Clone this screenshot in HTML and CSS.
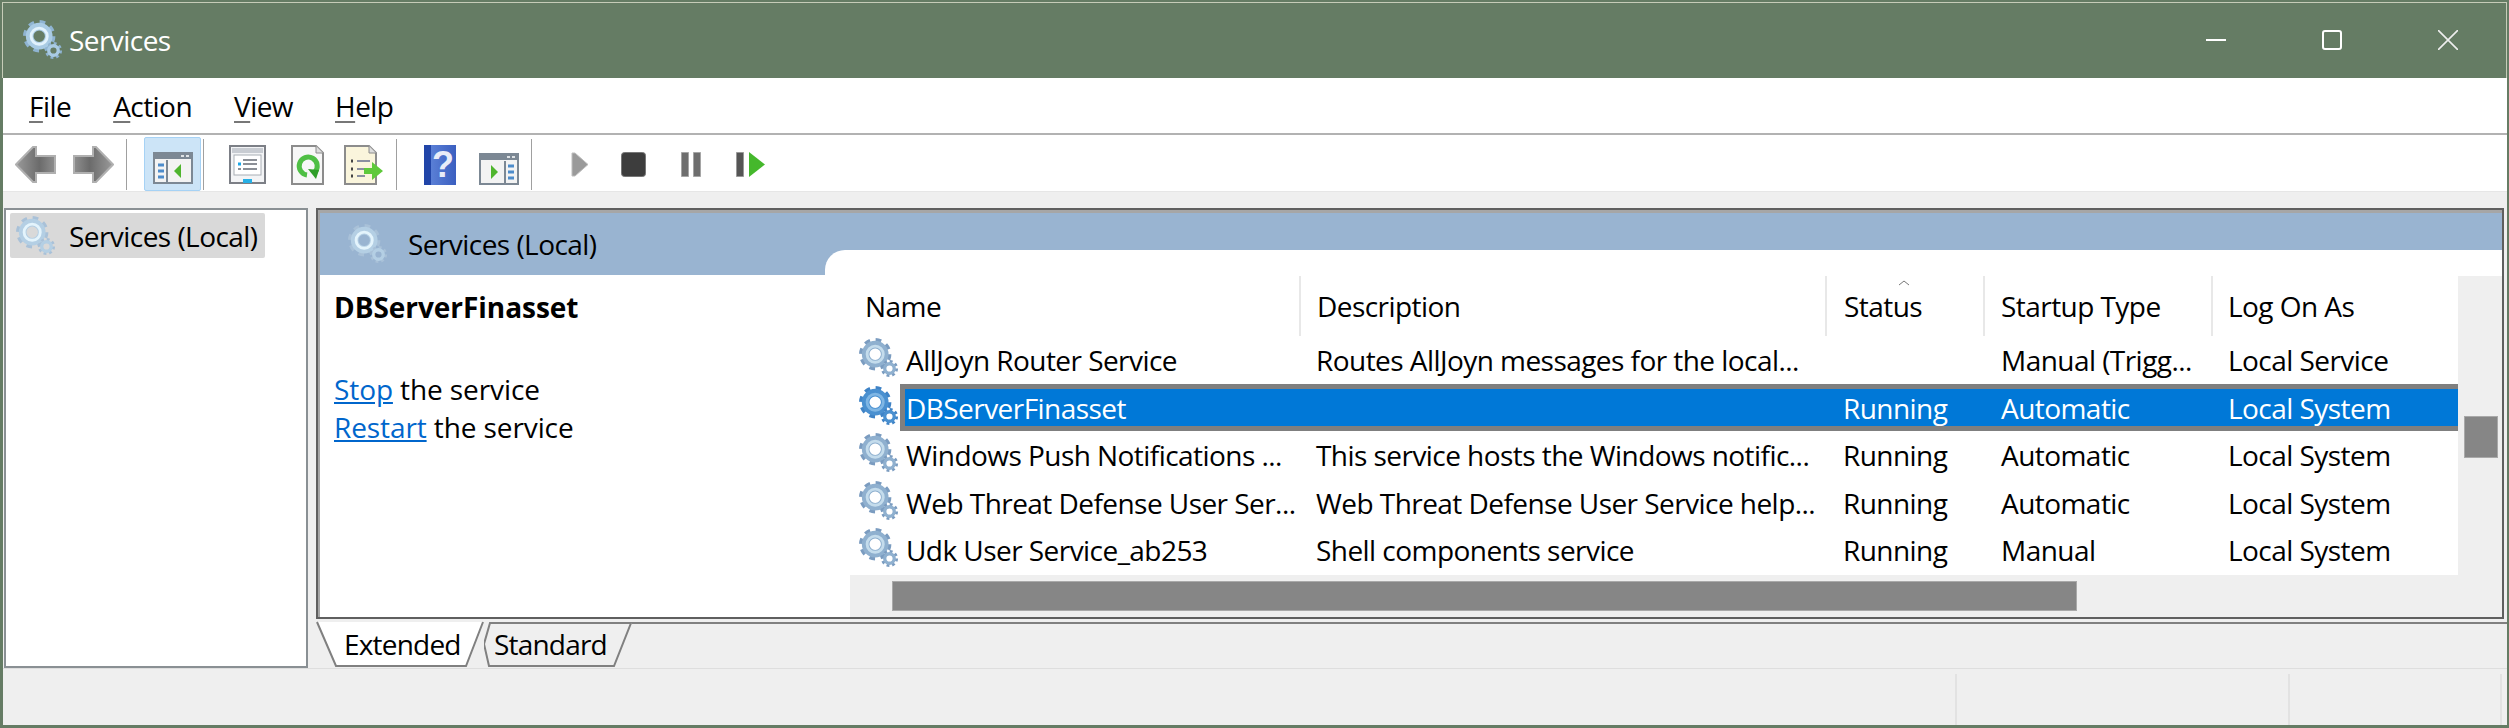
FILE: index.html
```html
<!DOCTYPE html>
<html lang="en">
<head>
    <meta charset="UTF-8">
    <title>Services</title>
    <link rel="stylesheet" href="styles.css">
</head>
<body>
    <!-- shared icon shapes -->
    <svg class="defs" width="0" height="0">
        <defs>
            <linearGradient id="arrowFill" x1="0" y1="0" x2="1" y2="0">
                <stop offset="0" stop-color="#9a9a9a"/>
                <stop offset="0.6" stop-color="#6b6b6b"/>
                <stop offset="1" stop-color="#8f8f8f"/>
            </linearGradient>
            <symbol id="gear" viewBox="0 0 42 42">
                <circle class="gear-teeth" cx="17" cy="17" r="14.5" fill="none" stroke-width="5" stroke-dasharray="5.7 5.69"/>
                <circle class="gear-body" cx="17" cy="17" r="10" fill="none" stroke-width="8"/>
                <circle class="gear-ring" cx="17" cy="17" r="8.5" fill="none" stroke-width="3"/>
                <circle class="gear-teeth" cx="32" cy="32" r="7.5" fill="none" stroke-width="3" stroke-dasharray="2.95 2.95"/>
                <circle class="gear-body" cx="32" cy="32" r="5" fill="none" stroke-width="3.5"/>
            </symbol>
            <symbol id="arrow" viewBox="0 0 41 37">
                <path d="M1 18.5 18 1h3v9h19v17H21v9h-3z" fill="url(#arrowFill)" stroke="#b0b0b0" stroke-width="2"/>
            </symbol>
        </defs>
    </svg>

    <div class="app">
        <header class="titlebar">
            <svg class="gear gear-title"><use href="#gear"/></svg>
            <span class="title-text">Services</span>
            <div class="win-controls">
                <div class="win-btn"><svg width="20" height="20"><path d="M0 10h20" stroke="#fff" stroke-width="2"/></svg></div>
                <div class="win-btn"><svg width="20" height="20"><rect x="1" y="1" width="18" height="18" rx="2" fill="none" stroke="#fff" stroke-width="2"/></svg></div>
                <div class="win-btn"><svg width="20" height="20"><path d="M0 0l20 20M20 0 0 20" stroke="#eee" stroke-width="1.6"/></svg></div>
            </div>
        </header>

        <div class="client">
            <nav class="menubar">
                <span class="menu-item"><u>F</u>ile</span>
                <span class="menu-item"><u>A</u>ction</span>
                <span class="menu-item"><u>V</u>iew</span>
                <span class="menu-item"><u>H</u>elp</span>
            </nav>

            <div class="toolbar">
                <div class="tb-group tb-nav">
                    <svg class="tb-icon" width="41" height="37"><use href="#arrow"/></svg>
                    <svg class="tb-icon flip" width="41" height="37"><use href="#arrow"/></svg>
                </div>
                <div class="tb-sep sep-a"></div>
                <div class="tb-active">
                    <svg width="40" height="32" viewBox="0 0 40 32">
                        <rect x="1" y="1" width="38" height="30" fill="#f3f3f3" stroke="#7c8894" stroke-width="2"/>
                        <rect x="1" y="1" width="38" height="6" fill="#7c8894"/>
                        <path d="M28 4h3M33 4h3" stroke="#dfe3e6" stroke-width="2"/>
                        <rect x="13" y="8" width="2" height="22" fill="#7c8894"/>
                        <path d="M5 13h6M5 19h6M5 25h6" stroke="#4d8ccb" stroke-width="3"/>
                        <path d="M21 19l7-7v14z" fill="#4fb52e"/>
                    </svg>
                </div>
                <div class="tb-sep sep-b"></div>
                <div class="tb-group tb-tools">
                    <svg class="tb-icon" width="37" height="40" viewBox="0 0 37 40">
                        <rect x="1" y="1" width="35" height="37" fill="#f3f4f6" stroke="#7c7f86" stroke-width="2"/>
                        <rect x="3" y="3" width="31" height="5" fill="#c8ccd2"/>
                        <rect x="5" y="10" width="27" height="20" fill="#fff" stroke="#a8adb4"/>
                        <path d="M9 19h3" stroke="#1aa7e8" stroke-width="3"/>
                        <path d="M14 15h14M14 19h14M14 24h14M9 24h3" stroke="#8b8f96" stroke-width="2"/>
                        <rect x="14" y="34" width="9" height="4" fill="#27b0e6"/>
                    </svg>
                    <svg class="tb-icon" width="33" height="40" viewBox="0 0 33 40">
                        <path d="M1 1h24l7 7v31H1z" fill="#f7f7f7" stroke="#8c8c8c" stroke-width="2"/>
                        <path d="M25 1v7h7" fill="#ddd" stroke="#8c8c8c"/>
                        <path d="M24 27a9 9 0 1 0-8 3" fill="none" stroke="#4fbf45" stroke-width="5"/>
                        <path d="M17 24l11 1-3 9z" fill="#2f9e29"/>
                    </svg>
                    <svg class="tb-icon" width="40" height="40" viewBox="0 0 40 40">
                        <path d="M1 1h24l7 7v31H1z" fill="#faf5dc" stroke="#8c8c8c" stroke-width="2"/>
                        <path d="M25 1v7h7" fill="#ddd" stroke="#8c8c8c"/>
                        <path d="M7 16h2M7 24h2M7 31h2" stroke="#444" stroke-width="3"/>
                        <path d="M13 16h13M13 24h8M13 31h8" stroke="#8a8fa0" stroke-width="2"/>
                        <path d="M20 23h8v-6l11 9-11 9v-6h-8z" fill="#5ec93a"/>
                    </svg>
                </div>
                <div class="tb-sep sep-c"></div>
                <div class="tb-group tb-help">
                    <div class="help-icon">?</div>
                    <svg class="tb-icon" width="40" height="32" viewBox="0 0 40 32">
                        <rect x="1" y="1" width="38" height="30" fill="#f3f3f3" stroke="#7c8894" stroke-width="2"/>
                        <rect x="1" y="1" width="38" height="6" fill="#7c8894"/>
                        <path d="M28 4h3M33 4h3" stroke="#dfe3e6" stroke-width="2"/>
                        <rect x="25" y="8" width="2" height="22" fill="#7c8894"/>
                        <path d="M29 13h6M29 19h6M29 25h6" stroke="#4d8ccb" stroke-width="3"/>
                        <path d="M19 19l-7-7v14z" fill="#4fb52e"/>
                    </svg>
                </div>
                <div class="tb-sep sep-c sep-d"></div>
                <div class="tb-group tb-media">
                    <svg class="tb-icon play" width="18" height="25" viewBox="0 0 18 25"><path d="M1 1h3l13 11.5L4 24H1z" fill="#9a9a9a" stroke="#bdbdbd"/></svg>
                    <svg class="tb-icon stop" width="25" height="25" viewBox="0 0 25 25"><rect x="0.5" y="0.5" width="24" height="24" rx="3" fill="#3d3d3d" stroke="#777"/></svg>
                    <svg class="tb-icon pause" width="20" height="25" viewBox="0 0 20 25"><path d="M.5.5h7v24h-7zM12.5.5h7v24h-7z" fill="#6e6e6e" stroke="#a5a5a5"/></svg>
                    <svg class="tb-icon" width="30" height="25" viewBox="0 0 30 25"><path d="M.5.5h7v24h-7z" fill="#555" stroke="#999"/><path d="M13 0l16 12.5L13 25z" fill="#45b82c"/></svg>
                </div>
            </div>

            <main class="main">
                <aside class="tree">
                    <div class="tree-item">
                        <svg class="gear gear-soft"><use href="#gear"/></svg>
                        <span>Services (Local)</span>
                    </div>
                </aside>

                <div class="right">
                    <section class="pane">
                        <div class="pane-grid">
                            <div class="pane-title">
                                <svg class="gear gear-soft"><use href="#gear"/></svg>
                                <span>Services (Local)</span>
                            </div>
                            <div class="desc">
                                <h2 class="desc-name">DBServerFinasset</h2>
                                <p class="desc-actions"><a href="#">Stop</a> the service<br><a href="#">Restart</a> the service</p>
                            </div>
                            <div class="list">
                                <div class="list-body">
                                    <div class="table">
                                        <div class="thead">
                                            <div class="th">Name</div>
                                            <div class="th">Description</div>
                                            <div class="th th-sorted">
                                                <svg class="sort-mark" width="12" height="6"><path d="M1 5l5-4 5 4" fill="none" stroke="#777"/></svg>
                                                Status
                                            </div>
                                            <div class="th">Startup Type</div>
                                            <div class="th th-last">Log On As</div>
                                        </div>
                                        <div class="row">
                                            <svg class="gear gear-list"><use href="#gear"/></svg>
                                            <div class="cells">
                                                <span>AllJoyn Router Service</span>
                                                <span>Routes AllJoyn messages for the local...</span>
                                                <span></span>
                                                <span>Manual (Trigg...</span>
                                                <span>Local Service</span>
                                            </div>
                                        </div>
                                        <div class="row selected">
                                            <svg class="gear gear-selected"><use href="#gear"/></svg>
                                            <div class="cells">
                                                <span>DBServerFinasset</span>
                                                <span></span>
                                                <span>Running</span>
                                                <span>Automatic</span>
                                                <span>Local System</span>
                                            </div>
                                        </div>
                                        <div class="row">
                                            <svg class="gear gear-list"><use href="#gear"/></svg>
                                            <div class="cells">
                                                <span>Windows Push Notifications ...</span>
                                                <span>This service hosts the Windows notific...</span>
                                                <span>Running</span>
                                                <span>Automatic</span>
                                                <span>Local System</span>
                                            </div>
                                        </div>
                                        <div class="row">
                                            <svg class="gear gear-list"><use href="#gear"/></svg>
                                            <div class="cells">
                                                <span>Web Threat Defense User Ser...</span>
                                                <span>Web Threat Defense User Service help...</span>
                                                <span>Running</span>
                                                <span>Automatic</span>
                                                <span>Local System</span>
                                            </div>
                                        </div>
                                        <div class="row">
                                            <svg class="gear gear-list"><use href="#gear"/></svg>
                                            <div class="cells">
                                                <span>Udk User Service_ab253</span>
                                                <span>Shell components service</span>
                                                <span>Running</span>
                                                <span>Manual</span>
                                                <span>Local System</span>
                                            </div>
                                        </div>
                                    </div>
                                    <div class="vscroll"><div class="vthumb"></div></div>
                                </div>
                                <div class="hscroll"><div class="hthumb"></div></div>
                            </div>
                        </div>
                    </section>

                    <div class="tabstrip">
                        <div class="tab tab-on">
                            <svg class="tab-shape" width="168" height="48"><path d="M1 3 20 47H150L167 3" fill="#fff" stroke="#808080" stroke-width="2"/></svg>
                            <span>Extended</span>
                        </div>
                        <div class="tab tab-off">
                            <svg class="tab-shape" width="148" height="48"><path d="M5 47 0 25 6 4H147L130 47z" fill="#efefef" stroke="#808080" stroke-width="2"/></svg>
                            <span>Standard</span>
                        </div>
                        <div class="tab-rest"></div>
                    </div>
                </div>
            </main>

            <footer class="statusbar">
                <div class="status-cell status-wide"></div>
                <div class="status-cell status-mid"></div>
                <div class="status-cell status-end"></div>
            </footer>
        </div>
    </div>
</body>
</html>
```

FILE: styles.css
```css
/* Services window */
:root {
  --frame: #657c64;
  --face: #efefef;
  --header-blue: #99b4d1;
}

* {
  box-sizing: border-box;
}

html, body {
  height: 100%;
}

body {
  margin: 0;
  background-color: var(--frame);
  font-family: "Open Sans", "Noto Sans", sans-serif;
  font-size: 28px;
  letter-spacing: -0.55px;
  color: #000;
  overflow: hidden;
}

.defs {
  position: absolute;
}

.app {
  height: 100%;
  padding: 2px 2px 3px 2px;
  display: flex;
  flex-direction: column;
}

/* gears */
.gear {
  width: 40px;
  height: 40px;
  flex: none;
}

.gear-teeth {
  stroke: var(--teeth);
}

.gear-body {
  stroke: var(--body);
}

.gear-ring {
  stroke: var(--ring);
}

.gear-title {
  --teeth: #8fb4d2;
  --body: #a9cbe4;
  --ring: #e2f2fc;
}

.gear-soft {
  --teeth: #a9c1d8;
  --body: #b4cfe4;
  --ring: #e4f4fc;
}

.gear-list {
  --teeth: #7b9cc0;
  --body: #8fb0cf;
  --ring: #c4dcec;
}

.gear-selected {
  --teeth: #3f83c6;
  --body: #4a90d0;
  --ring: #7fb6e4;
}

/* title bar */
.titlebar {
  height: 76px;
  flex: none;
  display: flex;
  align-items: center;
  padding-bottom: 2px;
  padding-left: 20px;
  border: 1px solid #c6ccb8;
  border-bottom: none;
  color: #fff;
}

.title-text {
  margin-left: 6px;
}

.win-controls {
  margin-left: auto;
  display: flex;
  align-self: stretch;
}

.win-btn {
  width: 116px;
  display: flex;
  align-items: center;
  justify-content: center;
}

.client {
  flex: 1;
  min-height: 0;
  display: flex;
  flex-direction: column;
  background-color: var(--face);
  border-left: 1px solid var(--frame);
}

/* menu */
.menubar {
  height: 55px;
  flex: none;
  display: flex;
  align-items: center;
  gap: 42px;
  padding-left: 26px;
  background-color: #fff;
}

.menu-item u {
  text-decoration-color: #777;
  text-decoration-thickness: 2px;
  text-underline-offset: 4px;
}

/* toolbar */
.toolbar {
  height: 59px;
  flex: none;
  display: flex;
  align-items: center;
  padding: 3px 0 0 12px;
  background-color: #fff;
  border-top: 2px solid #b2b2b2;
  border-bottom: 1px solid #e6e6e6;
}

.tb-group {
  display: flex;
  align-items: center;
}

.tb-nav {
  gap: 17px;
}

.tb-icon {
  display: block;
  flex: none;
}

.flip {
  transform: scaleX(-1);
}

.tb-sep {
  width: 1px;
  height: 51px;
  margin-top: -1px;
  background-color: #a0a0a0;
}

.sep-a {
  margin: 0 17px 0 12px;
}

.sep-b {
  margin: 0 25px 0 2px;
}

.sep-c {
  margin: 0 27px 0 12px;
}

.sep-d {
  margin-right: 39px;
}

.tb-active {
  width: 57px;
  height: 54px;
  margin-top: -1px;
  display: flex;
  align-items: center;
  justify-content: center;
  padding-top: 7px;
  background-color: #cce4f7;
  border: 1px solid #a6d2f5;
  border-radius: 2px;
}

.tb-tools svg:nth-child(1) {
  margin-right: 25px;
}

.tb-tools svg:nth-child(2) {
  margin-right: 20px;
}

.tb-help {
  gap: 23px;
}

.tb-help .tb-icon {
  margin-top: 8px;
}

.help-icon {
  width: 32px;
  height: 40px;
  background: linear-gradient(90deg, #2145a8 0 7px, #5a7fd6 7px, #3b5fc0);
  color: #e8ecf8;
  font-family: "Liberation Sans", sans-serif;
  font-size: 36px;
  font-weight: bold;
  line-height: 40px;
  text-align: center;
  padding-left: 6px;
  letter-spacing: 0;
}

.play {
  margin-right: 32px;
}

.stop, .pause {
  margin-right: 35px;
}

/* main area */
.main {
  flex: 1;
  min-height: 0;
  display: flex;
  padding: 16px 0 0 1px;
}

.tree {
  width: 304px;
  flex: none;
  background-color: #fff;
  border: 2px solid #8a9094;
  padding: 3px 0 0 4px;
}

.tree-item {
  width: 255px;
  height: 45px;
  display: flex;
  align-items: center;
  gap: 13px;
  padding-left: 6px;
  background-color: #d9d9d9;
  border-radius: 2px;
}

.right {
  flex: 1;
  min-width: 0;
  margin-left: 8px;
  display: flex;
  flex-direction: column;
}

.pane {
  flex: 1;
  min-height: 0;
  margin-right: 3px;
  border: 2px solid #5f5f5f;
}

.pane-grid {
  height: 100%;
  display: grid;
  grid-template-columns: 505px 1fr;
  grid-template-rows: 62px 1fr;
  background-color: var(--header-blue);
  border-top: 3px solid #a6a6a6;
  border-left: 2px solid #a6a6a6;
}

.pane-title {
  display: flex;
  align-items: center;
  gap: 20px;
  padding-left: 28px;
}

.desc {
  padding: 14px 0 0 14px;
  background-color: #fff;
}

.desc-name {
  margin: 0;
  font-size: 28px;
  font-weight: 700;
  letter-spacing: -0.05px;
  line-height: 36px;
}

.desc-actions {
  margin: 46px 0 0;
  letter-spacing: -0.1px;
  line-height: 37.5px;
}

.desc-actions a {
  color: #0066cc;
}

/* service list */
.list {
  grid-column: 2;
  grid-row: 1 / 3;
  margin-top: 37px;
  padding-top: 26px;
  display: flex;
  flex-direction: column;
  background-color: #fff;
  border-top-left-radius: 20px;
}

.list-body {
  flex: 1;
  min-height: 0;
  margin-left: 24px;
  display: flex;
}

.table {
  width: 1609px;
  flex: none;
}

.thead {
  height: 60px;
  display: grid;
  grid-template-columns: 452px 526px 158px 228px 245px;
}

.th {
  position: relative;
  padding-left: 16px;
  display: flex;
  align-items: center;
  border-right: 2px solid #e8e8e8;
}

.th-sorted {
  padding-left: 17px;
}

.th-last {
  padding-left: 15px;
  border-right: none;
}

.sort-mark {
  position: absolute;
  left: 71px;
  top: 4px;
}

.row {
  height: 47.6px;
  display: flex;
}

.row .gear {
  margin: 2px 1px 0 10px;
}

.cells {
  flex: 1;
  min-width: 0;
  display: grid;
  grid-template-columns: 396px 527px 158px 227px 245px;
  align-items: center;
  border: 5px solid transparent;
  border-right: none;
}

.cells span {
  padding-left: 15px;
  white-space: nowrap;
}

.cells span:first-child {
  padding-left: 1px;
}

.selected .cells {
  background-color: #0078d7;
  border-color: #7f7f7f;
  color: #fff;
}

.vscroll {
  flex: 1;
  padding: 140px 4px 0 6px;
  background-color: var(--face);
}

.vthumb {
  height: 42px;
  background-color: #868686;
  border: 1px solid #a9a9a9;
}

.hscroll {
  height: 42px;
  flex: none;
  margin-left: 25px;
  padding: 6px 0 0 42px;
  background-color: var(--face);
}

.hthumb {
  width: 1185px;
  height: 30px;
  background-color: #868686;
  border: 1px solid #a9a9a9;
}

/* tabs */
.tabstrip {
  height: 49px;
  flex: none;
  display: flex;
}

.tab {
  position: relative;
  height: 48px;
  flex: none;
  padding-top: 6px;
}

.tab span {
  position: relative;
}

.tab-shape {
  position: absolute;
  left: 0;
  top: 0;
}

.tab-on {
  width: 168px;
  padding-left: 28px;
  letter-spacing: -0.8px;
}

.tab-off {
  width: 148px;
  padding-left: 10px;
  letter-spacing: -0.8px;
}

.tab-rest {
  flex: 1;
  height: 2px;
  margin-top: 3px;
  background-color: #808080;
}

/* status bar */
.statusbar {
  height: 57px;
  flex: none;
  display: flex;
  padding-top: 5px;
  border-top: 1px solid #dedede;
}

.status-cell {
  border-right: 2px solid #e2e2e2;
}

.status-wide {
  flex: 1;
}

.status-mid {
  width: 333px;
}

.status-end {
  width: 212px;
  margin-right: 5px;
}
```
